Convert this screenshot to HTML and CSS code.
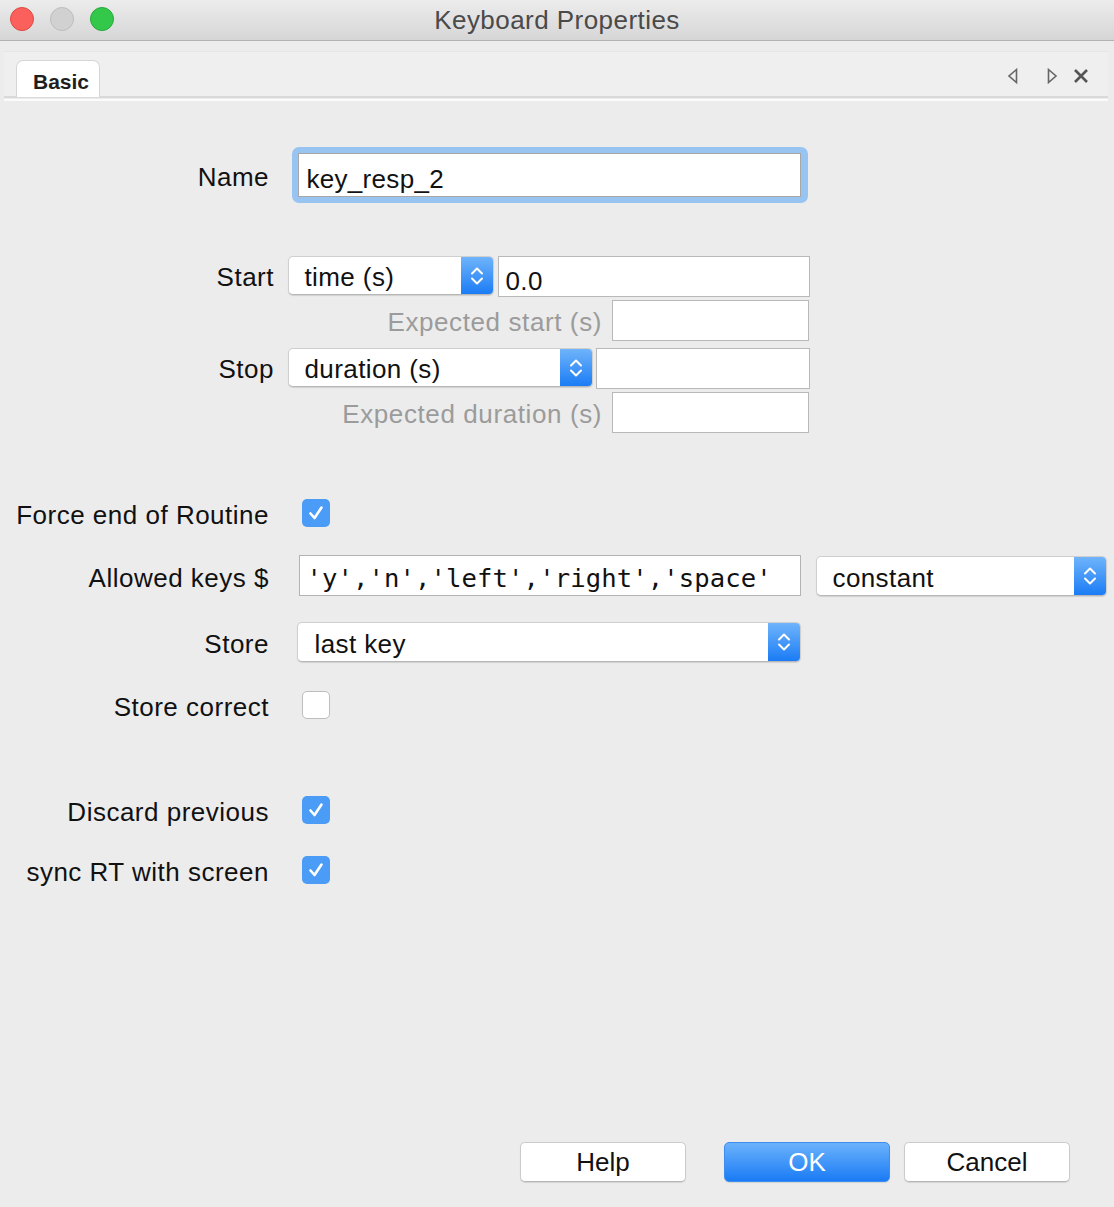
FILE: index.html
```html
<!DOCTYPE html>
<html>
<head>
<meta charset="utf-8">
<title>Keyboard Properties</title>
<link rel="stylesheet" href="styles.css">
</head>
<body>
<div class="window">
  <header class="titlebar">
    <div class="lights">
      <span class="light red"></span>
      <span class="light gray"></span>
      <span class="light green"></span>
    </div>
    <div class="title">Keyboard Properties</div>
  </header>

  <div class="tabbar">
    <div class="tab">Basic</div>
    <div class="tab-tools">
      <svg class="tool tool-prev" width="14" height="18" viewBox="0 0 14 18"><path d="M10.5 2.5 L3 9 L10.5 15.5 Z" fill="none" stroke="#666" stroke-width="1.6" stroke-linejoin="miter"/></svg>
      <svg class="tool tool-next" width="14" height="18" viewBox="0 0 14 18"><path d="M3.5 2.5 L11 9 L3.5 15.5 Z" fill="none" stroke="#666" stroke-width="1.6" stroke-linejoin="miter"/></svg>
      <svg class="tool" width="18" height="18" viewBox="0 0 18 18"><path d="M3 3 L15 15 M15 3 L3 15" stroke="#555" stroke-width="2.6"/></svg>
    </div>
  </div>
  <div class="tabline"></div>

  <main class="form">
    <div class="row name-row">
      <label class="lbl">Name</label>
      <div class="name-ring"><div class="field name-field">key_resp_2</div></div>
    </div>

    <div class="timing">
      <div class="trow start-row">
        <label class="tlbl">Start</label>
        <div class="select w-time">
          <span class="sel-text">time (s)</span>
          <span class="stepper"><svg width="14" height="26" viewBox="0 0 14 26"><path d="M2 10.5 L7 5.5 L12 10.5 M2 15.5 L7 20.5 L12 15.5" fill="none" stroke="#fff" stroke-width="2" stroke-linecap="round" stroke-linejoin="round"/></svg></span>
        </div>
        <div class="field w-start">0.0</div>
      </div>
      <div class="trow exp-row first-exp">
        <label class="elbl">Expected start (s)</label>
        <div class="field w-exp"></div>
      </div>
      <div class="trow stop-row">
        <label class="tlbl">Stop</label>
        <div class="select w-dur">
          <span class="sel-text">duration (s)</span>
          <span class="stepper"><svg width="14" height="26" viewBox="0 0 14 26"><path d="M2 10.5 L7 5.5 L12 10.5 M2 15.5 L7 20.5 L12 15.5" fill="none" stroke="#fff" stroke-width="2" stroke-linecap="round" stroke-linejoin="round"/></svg></span>
        </div>
        <div class="field w-stop"></div>
      </div>
      <div class="trow exp-row">
        <label class="elbl">Expected duration (s)</label>
        <div class="field w-exp"></div>
      </div>
    </div>

    <div class="row check-row force-row">
      <label class="lbl">Force end of Routine</label>
      <span class="checkbox checked"><svg width="28" height="28" viewBox="0 0 28 28"><path d="M8.5 14.5 L12.5 19 L19.5 8.5" fill="none" stroke="#fff" stroke-width="2.6" stroke-linecap="round" stroke-linejoin="round"/></svg></span>
    </div>

    <div class="row keys-row">
      <label class="lbl">Allowed keys $</label>
      <div class="field mono w-keys">'y','n','left','right','space'</div>
      <div class="select w-const">
        <span class="sel-text">constant</span>
        <span class="stepper"><svg width="14" height="26" viewBox="0 0 14 26"><path d="M2 10.5 L7 5.5 L12 10.5 M2 15.5 L7 20.5 L12 15.5" fill="none" stroke="#fff" stroke-width="2" stroke-linecap="round" stroke-linejoin="round"/></svg></span>
      </div>
    </div>

    <div class="row store-row">
      <label class="lbl">Store</label>
      <div class="select w-store">
        <span class="sel-text">last key</span>
        <span class="stepper"><svg width="14" height="26" viewBox="0 0 14 26"><path d="M2 10.5 L7 5.5 L12 10.5 M2 15.5 L7 20.5 L12 15.5" fill="none" stroke="#fff" stroke-width="2" stroke-linecap="round" stroke-linejoin="round"/></svg></span>
      </div>
    </div>

    <div class="row check-row correct-row">
      <label class="lbl">Store correct</label>
      <span class="checkbox"></span>
    </div>

    <div class="row check-row discard-row">
      <label class="lbl">Discard previous</label>
      <span class="checkbox checked"><svg width="28" height="28" viewBox="0 0 28 28"><path d="M8.5 14.5 L12.5 19 L19.5 8.5" fill="none" stroke="#fff" stroke-width="2.6" stroke-linecap="round" stroke-linejoin="round"/></svg></span>
    </div>

    <div class="row check-row sync-row">
      <label class="lbl">sync RT with screen</label>
      <span class="checkbox checked"><svg width="28" height="28" viewBox="0 0 28 28"><path d="M8.5 14.5 L12.5 19 L19.5 8.5" fill="none" stroke="#fff" stroke-width="2.6" stroke-linecap="round" stroke-linejoin="round"/></svg></span>
    </div>
  </main>

  <footer class="buttons">
    <button class="btn btn-help">Help</button>
    <button class="btn btn-ok">OK</button>
    <button class="btn btn-cancel">Cancel</button>
  </footer>
</div>
</body>
</html>
```

FILE: styles.css
```css
html, body {
  margin: 0;
  padding: 0;
  width: 1114px;
  height: 1207px;
  overflow: hidden;
  background: #ececec;
}
body {
  font-family: "Liberation Sans", Arial, sans-serif;
  font-size: 26px;
  color: #111;
}
.window {
  display: flex;
  flex-direction: column;
  height: 1207px;
}

/* title bar */
.titlebar {
  height: 40px;
  border-bottom: 1px solid #b2b2b2;
  background: linear-gradient(#ececec, #d6d6d6);
  display: flex;
  align-items: center;
  position: relative;
  flex: none;
}
.lights {
  display: flex;
  gap: 16px;
  padding-left: 10px;
}
.light {
  width: 24px;
  height: 24px;
  border-radius: 50%;
  box-sizing: border-box;
  margin-top: -2px;
}
.light.red { background: #fc605c; border: 1px solid #de4943; }
.light.gray { background: #d1d1d1; border: 1px solid #bdbdbd; }
.light.green { background: #34c84a; border: 1px solid #28a83b; }
.title {
  position: absolute;
  left: 0;
  right: 0;
  top: 0;
  height: 40px;
  line-height: 40px;
  text-align: center;
  color: #4a4a4a;
  font-size: 26px;
  letter-spacing: 0.45px;
}

/* tabs */
.tabbar {
  margin: 10px 6px 0 4px;
  height: 44px;
  background: #efefef;
  border-top: 1px solid #e6e6e6;
  border-bottom: 2px solid #d9d9d9;
  display: flex;
  align-items: flex-end;
  padding-left: 12px;
  flex: none;
}
.tab {
  width: 84px;
  height: 37px;
  box-sizing: border-box;
  background: #fff;
  border: 1px solid #d6d6d6;
  border-bottom: none;
  border-radius: 7px 7px 0 0;
  font-weight: bold;
  font-size: 21px;
  color: #1e1e1e;
  padding-left: 16px;
  line-height: 42px;
  margin-bottom: -1px;
}
.tab-tools {
  margin-left: auto;
  display: flex;
  align-items: center;
  height: 44px;
  padding-top: 4px;
  box-sizing: border-box;
  padding-right: 18px;
}
.tool-prev { margin-right: 25px; }
.tool-next { margin-right: 13px; }
.tabline {
  height: 2px;
  margin: 1px 6px 0 4px;
  background: #fbfbfb;
  flex: none;
}

/* form */
.form {
  display: flex;
  flex-direction: column;
  flex: none;
}
.row {
  display: flex;
  align-items: center;
}
.lbl {
  width: 269px;
  flex: none;
  text-align: right;
  white-space: nowrap;
  letter-spacing: 0.5px;
  margin-right: -0.5px;
  padding-top: 5px;
  box-sizing: border-box;
}
.field {
  box-sizing: border-box;
  background: #fff;
  border: 1px solid #b9b9b9;
  height: 41px;
  line-height: 45px;
  padding-left: 6px;
  white-space: nowrap;
  overflow: hidden;
  color: #111;
}

.name-row { margin-top: 46px; height: 56px; }
.name-ring {
  margin-left: 23px;
  width: 516px;
  height: 56px;
  box-sizing: border-box;
  padding: 6px 7px 6px 6px;
  background: #98c4f2;
  border-radius: 7px;
}
.name-field {
  height: 44px;
  line-height: 50px;
  padding-left: 8px;
  border-color: #a7a7a7;
  letter-spacing: 0.3px;
}

/* selects */
.select {
  display: flex;
  box-sizing: border-box;
  height: 39px;
  background: #fff;
  border: 1px solid #cfcfcf;
  border-bottom-color: #b7b7b7;
  border-radius: 5px;
  box-shadow: 0 1px 1px rgba(0, 0, 0, 0.12);
  overflow: hidden;
  flex: none;
}
.sel-text {
  flex: 1;
  padding-left: 16px;
  line-height: 41px;
  white-space: nowrap;
  letter-spacing: 0.4px;
}
.stepper {
  width: 32px;
  flex: none;
  background: linear-gradient(#6fb4fb, #1b7cf5);
  display: flex;
  align-items: center;
  justify-content: center;
}

/* timing block */
.timing {
  margin-top: 53px;
  display: flex;
  flex-direction: column;
}
.trow {
  display: flex;
  align-items: flex-start;
  height: 41px;
}
.tlbl {
  width: 274px;
  flex: none;
  text-align: right;
  line-height: 42px;
  letter-spacing: 0.5px;
  margin-right: -0.5px;
}
.trow .select { margin-left: 14px; }
.w-time { width: 206px; }
.w-start { width: 312px; margin-left: 4px; }
.w-dur { width: 305px; }
.w-stop { width: 214px; margin-left: 3px; }
.exp-row { margin-top: 3px; }
.stop-row { margin-top: 7px; }
.elbl {
  width: 602px;
  flex: none;
  text-align: right;
  color: #9b9b9b;
  line-height: 45px;
  letter-spacing: 0.6px;
  margin-right: -0.6px;
}
.w-exp { width: 197px; margin-left: 11px; }
.start-row .field { padding-left: 7px; line-height: 48px; letter-spacing: 0.4px; }

/* checkboxes */
.checkbox {
  width: 28px;
  height: 28px;
  box-sizing: border-box;
  border-radius: 5px;
  margin-left: 33px;
  background: #fff;
  border: 1px solid #bdbdbd;
  flex: none;
  display: block;
}
.checkbox.checked {
  background: #4b9cf6;
  border: none;
}
.checkbox svg { display: block; }
.check-row { height: 28px; }
.force-row { margin-top: 66px; }

.keys-row { margin-top: 28px; height: 41px; }
.w-keys {
  margin-left: 30px;
  width: 502px;
  padding-left: 7px;
  border-color: #b3b3b3;
}
.mono {
  font-family: "DejaVu Sans Mono", "Liberation Mono", monospace;
  font-size: 25.6px;
  line-height: 45px;
  letter-spacing: 0.1px;
}
.w-const {
  width: 291px;
  margin-left: 15px;
  height: 40px;
  margin-top: 1px;
}
.w-const .sel-text { line-height: 43px; padding-left: 16px; }

.store-row { margin-top: 26px; height: 40px; }
.w-store {
  width: 504px;
  height: 40px;
  margin-left: 28px;
}
.w-store .sel-text { padding-left: 17px; line-height: 43px; }

.correct-row { margin-top: 29px; }
.discard-row { margin-top: 77px; }
.sync-row { margin-top: 32px; }

/* buttons */
.buttons {
  margin-top: 258px;
  display: flex;
  justify-content: flex-end;
  padding-right: 44px;
  flex: none;
}
.btn {
  font-family: "Liberation Sans", Arial, sans-serif;
  font-size: 26px;
  width: 166px;
  height: 40px;
  box-sizing: border-box;
  border-radius: 5px;
  background: #fff;
  border: 1px solid #cbcbcb;
  border-bottom-color: #b5b5b5;
  box-shadow: 0 1px 1px rgba(0, 0, 0, 0.1);
  color: #111;
  padding: 0;
  margin: 0;
}
.btn-ok {
  margin-left: 38px;
  background: linear-gradient(#6bb2fb, #1a7bf5);
  border: 1px solid #3e8ef0;
  color: #fff;
}
.btn-cancel { margin-left: 14px; }
```
